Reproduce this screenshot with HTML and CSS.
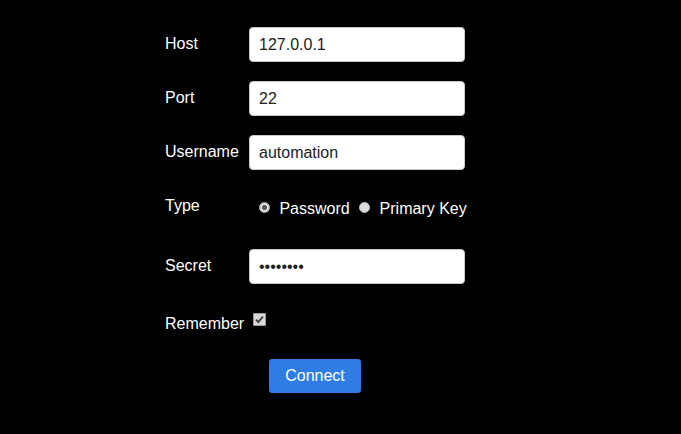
FILE: index.html
```html
<!DOCTYPE html>
<html>
<head>
<meta charset="utf-8">
<link rel="stylesheet" href="styles.css">
</head>
<body>
<form class="form">
  <div class="row">
    <label class="lbl">Host</label>
    <input class="field" type="text" value="127.0.0.1">
  </div>
  <div class="row">
    <label class="lbl">Port</label>
    <input class="field" type="text" value="22">
  </div>
  <div class="row">
    <label class="lbl">Username</label>
    <input class="field" type="text" value="automation">
  </div>
  <div class="row row-type">
    <label class="lbl lbl-type">Type</label>
    <div class="radios">
      <input class="radio radio-first" type="radio" name="type" checked disabled> Password <input class="radio" type="radio" name="type" disabled> Primary Key
    </div>
  </div>
  <div class="row">
    <label class="lbl">Secret</label>
    <input class="field" type="password" value="12345678">
  </div>
  <div class="remember">
    Remember <input class="check" type="checkbox" checked disabled>
  </div>
  <div class="actions">
    <button class="btn" type="button">Connect</button>
  </div>
</form>
</body>
</html>
```

FILE: styles.css
```css
html, body {
  margin: 0;
  padding: 0;
  background: #000;
}
body {
  font-family: "Liberation Sans", Arial, sans-serif;
  font-size: 16px;
  color: #fff;
}
.form {
  padding: 27px 0 0 165px;
}
.row {
  display: flex;
  align-items: center;
  height: 35px;
  margin-bottom: 19px;
}
.lbl {
  width: 84px;
  flex: none;
  padding-bottom: 1px;
}
.field {
  box-sizing: border-box;
  width: 216px;
  height: 35px;
  margin: 0;
  padding: 0 9px;
  border: 1px solid #c8c8c8;
  border-radius: 4px;
  background: #fff;
  color: #222;
  font-family: "Liberation Sans", Arial, sans-serif;
  font-size: 16px;
  outline: none;
}
.row-type {
  align-items: flex-start;
  height: 41px;
}
.lbl-type {
  padding: 8px 0 0;
}
.radios {
  padding-top: 11px;
  white-space: nowrap;
}
.radio {
  -webkit-appearance: none;
  appearance: none;
  box-sizing: border-box;
  width: 11px;
  height: 11px;
  margin: 0 5px 0 5px;
  border: 1px solid #bdbdbd;
  border-radius: 50%;
  background: #dcdcdc;
  vertical-align: 1px;
}
.radio:checked {
  background: radial-gradient(circle, #5c5c5c 0, #5c5c5c 2.4px, #eeeeee 2.9px, #e6e6e6 3.6px, #c4c4c4 4.2px);
}
.radio-first {
  margin-left: 10px;
}
.remember {
  padding-top: 10px;
  line-height: 18px;
}
.check {
  -webkit-appearance: none;
  appearance: none;
  box-sizing: border-box;
  width: 13px;
  height: 13px;
  margin: 0 3px 0 4px;
  border: 1px solid #9a9a9a;
  border-radius: 1px;
  background: #d8d8d8 url("data:image/svg+xml,%3Csvg xmlns='http://www.w3.org/2000/svg' viewBox='0 0 11 11'%3E%3Cpath d='M2 5.6 L4.3 8 L9 2.6' fill='none' stroke='%23444' stroke-width='2'/%3E%3C/svg%3E") center / 11px 11px no-repeat;
  vertical-align: 3px;
}
.actions {
  padding: 26px 0 0 104px;
}
.btn {
  width: 92px;
  height: 34px;
  margin: 0;
  padding: 0;
  border: none;
  border-radius: 3px;
  background: #2f7de3;
  color: #fff;
  font-family: "Liberation Sans", Arial, sans-serif;
  font-size: 16px;
}
```
